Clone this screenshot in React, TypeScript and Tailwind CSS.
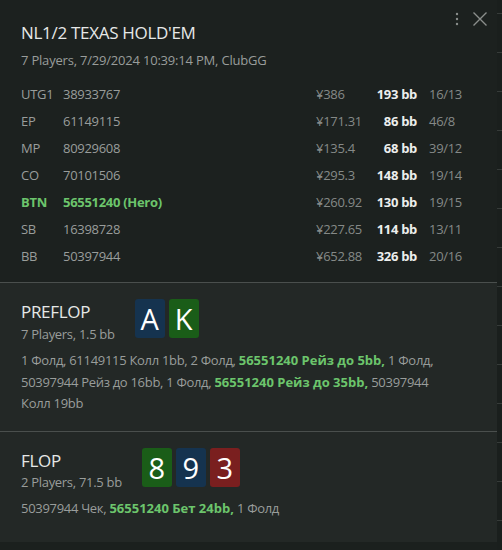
import React from "react";

const players = [
  { pos: "UTG1", id: "38933767", money: "¥386", bb: "193 bb", st: "16/13" },
  { pos: "EP", id: "61149115", money: "¥171.31", bb: "86 bb", st: "46/8" },
  { pos: "MP", id: "80929608", money: "¥135.4", bb: "68 bb", st: "39/12" },
  { pos: "CO", id: "70101506", money: "¥295.3", bb: "148 bb", st: "19/14" },
  { pos: "BTN", id: "56551240 (Hero)", money: "¥260.92", bb: "130 bb", st: "19/15", hero: true },
  { pos: "SB", id: "16398728", money: "¥227.65", bb: "114 bb", st: "13/11" },
  { pos: "BB", id: "50397944", money: "¥652.88", bb: "326 bb", st: "20/16" },
];

function Card({ v, c }: { v: string; c: string }) {
  return (
    <div
      className={`w-[30px] h-[39px] rounded-[3px] flex items-center justify-center text-white text-[29px] leading-none ${c}`}
    >
      {v}
    </div>
  );
}

const G = ({ children }: { children: React.ReactNode }) => (
  <span className="font-bold text-[#6cc56c] tracking-normal">{children}</span>
);

export default function App() {
  return (
    <div
      className="w-[502px] h-[550px] flex bg-[#1b201e] overflow-hidden text-[13px] text-[#999d9b]"
      style={{ fontFamily: '"Open Sans", "Noto Sans", sans-serif' }}
    >
      <div className="w-[497px] h-full flex flex-col">
        {/* header */}
        <div className="bg-[#1c211f] px-[21px] pt-[21px] pb-[12px] relative">
          <div className="absolute right-[9px] top-[11px] flex items-center gap-[13px]">
            <svg width="4" height="14" viewBox="0 0 4 14">
              <circle cx="2" cy="2" r="1.2" fill="#8a8e8c" />
              <circle cx="2" cy="7" r="1.2" fill="#8a8e8c" />
              <circle cx="2" cy="12" r="1.2" fill="#8a8e8c" />
            </svg>
            <svg width="16" height="16" viewBox="0 0 16 16">
              <path d="M1.5 1.5 L14.5 14.5 M14.5 1.5 L1.5 14.5" stroke="#8a8e8c" strokeWidth="1.4" />
            </svg>
          </div>
          <div className="text-[17px] leading-[24px] text-[#e6e8e7] tracking-[-0.3px]">NL1/2 TEXAS HOLD'EM</div>
          <div className="mt-[6px] leading-[18px] tracking-[-0.2px]">7 Players, 7/29/2024 10:39:14 PM, ClubGG</div>
          <div className="mt-[12px] flex flex-col tracking-[-0.3px]">
            {players.map((p) => (
              <div key={p.pos} className="h-[27px] flex items-center">
                <div className={`w-[42px] ${p.hero ? "font-bold text-[#6cc56c]" : ""}`}>{p.pos}</div>
                <div className={`w-[253px] ${p.hero ? "font-bold text-[#6cc56c]" : ""}`}>{p.id}</div>
                <div className="w-[56px] text-[#858987]">{p.money}</div>
                <div className="w-[45px] text-right font-bold text-[#eceeed]">{p.bb}</div>
                <div className="pl-[12px] text-[#858987]">{p.st}</div>
              </div>
            ))}
          </div>
        </div>
        <div className="h-px bg-[#4a4f4d]" />
        {/* preflop */}
        <div className="bg-[#232826] px-[21px] pt-[16px] pb-[16px]">
          <div className="flex items-start">
            <div className="pt-px mr-[20px]">
              <div className="text-[17px] leading-[24px] text-[#e6e8e7] tracking-[-0.3px]">PREFLOP</div>
              <div className="leading-[18px] mt-px tracking-[-0.3px]">7 Players, 1.5 bb</div>
            </div>
            <div className="flex gap-[4px]">
              <Card v="A" c="bg-[#15334f]" />
              <Card v="K" c="bg-[#1a5d18]" />
            </div>
          </div>
          <div className="mt-[7px] leading-[21.5px] tracking-[-0.3px]">
            1 Фолд, 61149115 Колл 1bb, 2 Фолд, <G>56551240 Рейз до 5bb,</G> 1 Фолд,
            <br />
            50397944 Рейз до 16bb, 1 Фолд, <G>56551240 Рейз до 35bb,</G> 50397944
            <br />
            Колл 19bb
          </div>
        </div>
        <div className="h-px bg-[#4a4f4d]" />
        {/* flop */}
        <div className="bg-[#232826] px-[21px] pt-[16px] flex-1">
          <div className="flex items-start">
            <div className="pt-px mr-[20px]">
              <div className="text-[17px] leading-[24px] text-[#e6e8e7] tracking-[-0.3px]">FLOP</div>
              <div className="leading-[18px] tracking-[-0.3px]">2 Players, 71.5 bb</div>
            </div>
            <div className="flex gap-[4px]">
              <Card v="8" c="bg-[#1a5d18]" />
              <Card v="9" c="bg-[#15334f]" />
              <Card v="3" c="bg-[#7a1f1f]" />
            </div>
          </div>
          <div className="mt-[7px] leading-[21.5px] tracking-[-0.3px]">
            50397944 Чек, <G>56551240 Бет 24bb,</G> 1 Фолд
          </div>
        </div>
        <div className="h-[8px] bg-[#1b201e]" />
      </div>
      <div className="w-[5px] h-full bg-[#1a1f1d] flex flex-col pt-[13px]">
        {Array.from({ length: 14 }).map((_, i) => (
          <div key={i} className="h-[39px] shrink-0 border-t border-[#363b39]" />
        ))}
      </div>
    </div>
  );
}
